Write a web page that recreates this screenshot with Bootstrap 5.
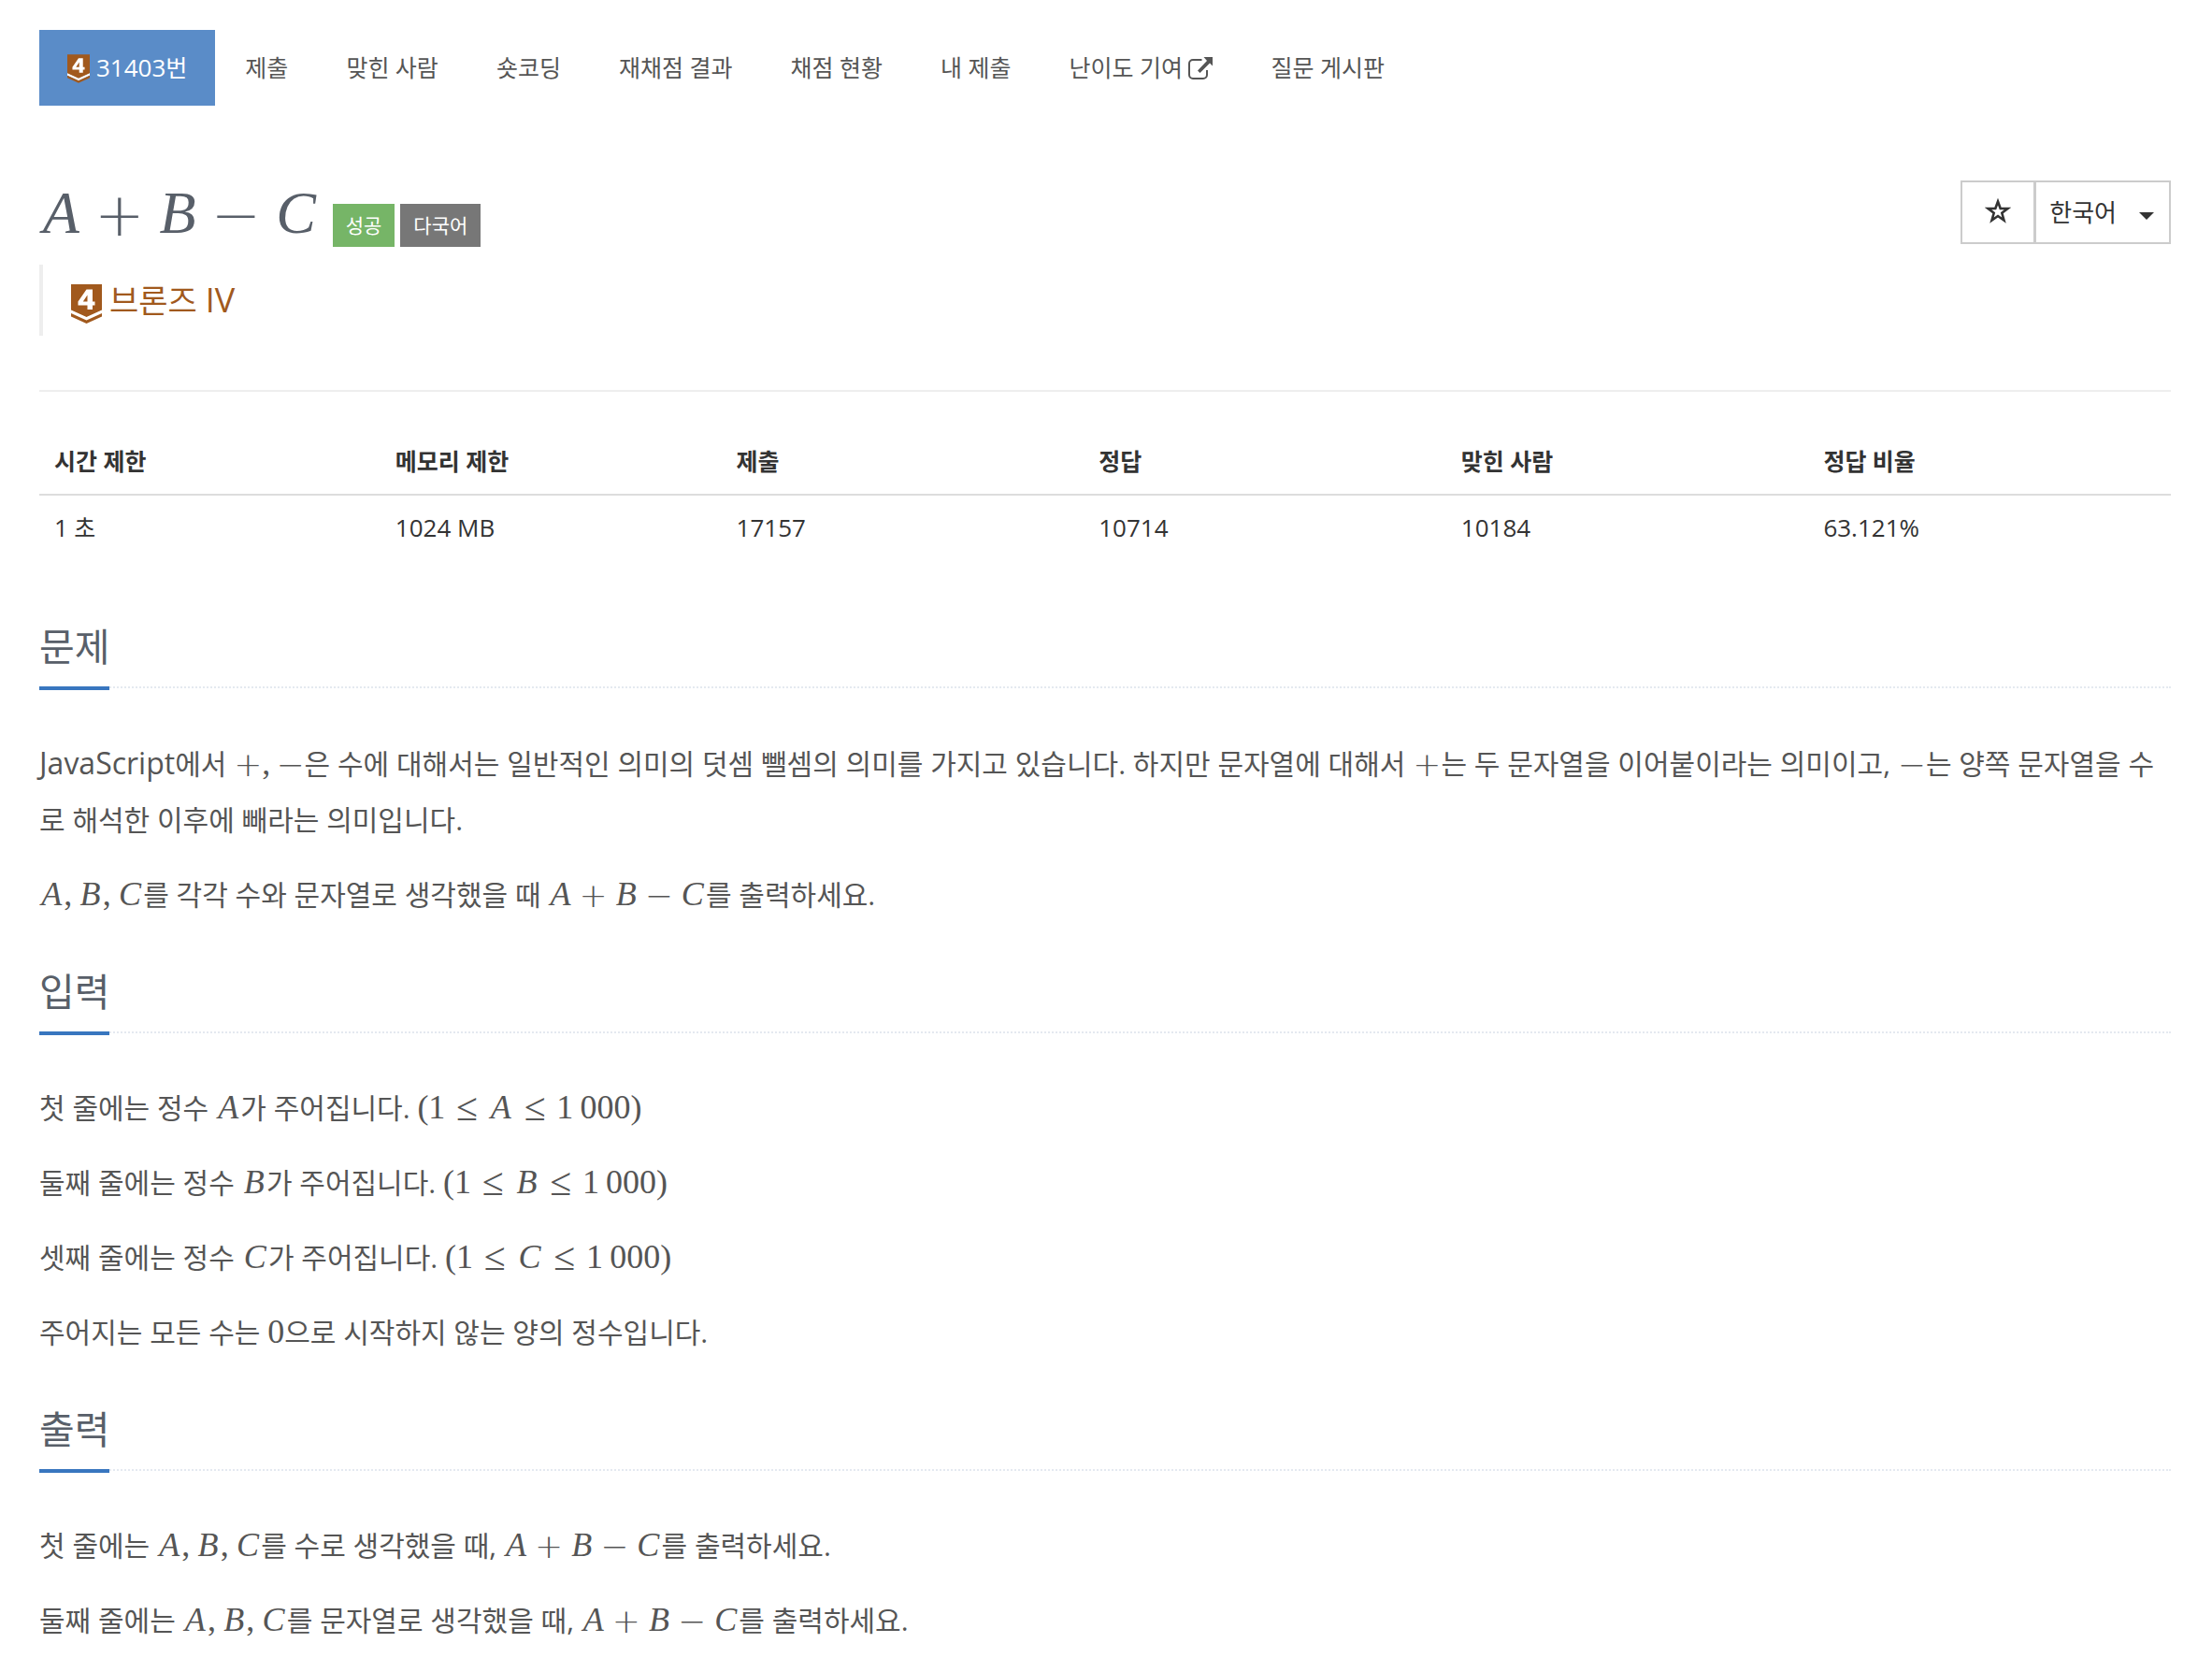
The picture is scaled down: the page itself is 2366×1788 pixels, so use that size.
<!DOCTYPE html>
<html lang="ko">
<head>
<meta charset="utf-8">
<meta name="viewport" content="width=device-width, initial-scale=1">
<title>31403번: A + B - C</title>
<link href="https://cdn.jsdelivr.net/npm/bootstrap@5.3.0/dist/css/bootstrap.min.css" rel="stylesheet">
<style>
  body {
    font-family: "Open Sans", "Noto Sans CJK KR", sans-serif;
    font-size: 30px;
    line-height: 60px;
    color: #555;
    background: #fff;
  }
  .page { padding: 32px 44px 0 42px; }

  /* Hangul is set a step smaller than the Latin text beside it */
  .lat { font-size: 32px; }

  /* problem menu */
  .menu { gap: 2px; font-size: 25px; line-height: 37px; }
  .menu .lat { font-size: 26px; }
  .menu .nav-link { padding: 22px 30px; color: #555; border-radius: 0; }
  .menu .nav-link.active { background: #5a8cc8; color: #fff; }
  .menu svg { vertical-align: -7px; }
  .menu .tier { margin-right: 7px; }

  /* title */
  .title-row { margin-top: 80px; }
  .title-row h1 { font-size: 64px; line-height: 64px; color: #585f69; }
  .tag { font-size: 21px; line-height: 30px; padding: 8px 14px; color: #fff; }
  .tag-ok { background: #76b567; margin: 0 6px 0 14px; }
  .tag-lang { background: #777; }
  .tools .btn {
    height: 68px;
    border: 2px solid #ccc;
    border-radius: 0;
    background: #fff;
    color: #333;
    font-size: 26px;
    line-height: 40px;
  }
  .tools .btn-star { width: 80px; padding: 0; }
  .tools .btn-star svg { display: block; margin: 0 auto 2px; }
  .tools .btn-lang { padding: 12px 16px 12px 14px; margin-left: -2px; }
  .tools .dropdown-toggle::after {
    margin-left: 24px;
    vertical-align: 2px;
    border-top: 8px solid;
    border-right: 8px solid transparent;
    border-left: 8px solid transparent;
  }

  .level { height: 76px; margin-top: 19px; padding-left: 30px; border-left: 4px solid #eee; font-size: 34px; line-height: 76px; color: #a1591d; }
  .level .lat { font-size: 36px; }
  .level a { color: inherit; }
  .rule { border-top: 2px solid #eee; margin: 58px 0 40px; opacity: 1; }

  /* limits table */
  .limits { font-size: 25px; line-height: 37px; color: #333; margin-bottom: 62px; }
  .limits th, .limits td { padding: 16px; border: 0; color: #333; }
  .limits th { width: 17%; border-bottom: 2px solid #ddd; }
  .limits th.narrow { width: 16%; }
  .limits .lat { font-size: 26px; }

  /* sections */
  .headline { border-bottom: 2px dotted #e4e9f0; margin-bottom: 50px; }
  .headline h2 {
    display: inline-block;
    font-size: 41px;
    font-weight: 400;
    line-height: 60px;
    color: #585f69;
    padding-bottom: 13px;
    margin: 0 0 -4px;
    border-bottom: 4px solid #3876bf;
    vertical-align: top;
  }
  .section + .section { padding-top: 23px; }
  .section p { margin-bottom: 20px; }

  /* formulas */
  .fx { font-family: "Liberation Serif", serif; font-size: 36px; line-height: 1; white-space: nowrap; }
  h1 .fx { font-size: inherit; }
  .fx var { font-style: italic; margin: 0 .06em; }
  .fx .cm { margin-right: .17em; }
  .fx .op { font-family: "DejaVu Sans", sans-serif; font-weight: 200; line-height: 1; vertical-align: -.05em; margin: 0 .19em; }
  .fx .rel { font-size: 1.16em; line-height: 1; vertical-align: -.05em; margin: 0 .28em; }
  .fx .bare { margin: 0; }
</style>
</head>
<body>
<svg class="d-none" xmlns="http://www.w3.org/2000/svg">
  <symbol id="tier" viewBox="0 0 33 42">
    <path fill="#a1591d" d="M0 0h33v28L16.500 35.500 0 28z"/>
    <path fill="#fff" d="M0 27.500 16.500 35 33 27.500V31L16.500 38.500 0 31z"/>
    <path fill="#a1591d" d="M0 31 16.500 38.500 33 31v3.500L16.500 42 0 34.500z"/>
    <path fill="#fff" fill-rule="evenodd" d="M16.500 5.500H23V18.500h2.500v4H23V27h-5.500v-4.500H7.500v-4zM17.500 11.500 12.800 18.500h4.700z"/>
  </symbol>
</svg>

<div class="page container-fluid">
  <nav aria-label="문제 메뉴">
    <ul class="nav nav-pills menu">
      <li class="nav-item"><a class="nav-link active" aria-current="page" href="#"><svg class="tier" width="24" height="31" aria-hidden="true"><use href="#tier"/></svg><span class="lat">31403</span>번</a></li>
      <li class="nav-item"><a class="nav-link" href="#">제출</a></li>
      <li class="nav-item"><a class="nav-link" href="#">맞힌 사람</a></li>
      <li class="nav-item"><a class="nav-link" href="#">숏코딩</a></li>
      <li class="nav-item"><a class="nav-link" href="#">재채점 결과</a></li>
      <li class="nav-item"><a class="nav-link" href="#">채점 현황</a></li>
      <li class="nav-item"><a class="nav-link" href="#">내 제출</a></li>
      <li class="nav-item"><a class="nav-link" href="#">난이도 기여 <svg width="26" height="30" viewBox="0 0 26 30" aria-hidden="true"><path d="M14.500 5H5a4 4 0 0 0-4 4v12a4 4 0 0 0 4 4h11a4 4 0 0 0 4-4v-5" fill="none" stroke="currentColor" stroke-width="2"/><path d="M16.500 2H26v9.500l-3-3L12.500 19 10 16.500 20 6z" fill="currentColor"/></svg></a></li>
      <li class="nav-item"><a class="nav-link" href="#">질문 게시판</a></li>
    </ul>
  </nav>

  <div class="title-row d-flex justify-content-between align-items-start">
    <div class="d-flex align-items-baseline">
      <h1 class="m-0"><span class="fx"><var>A</var><span class="op">+</span><var>B</var><span class="op">−</span><var>C</var></span></h1>
      <span class="tag tag-ok">성공</span>
      <span class="tag tag-lang">다국어</span>
    </div>
    <div class="btn-group tools">
      <button type="button" class="btn btn-star" aria-label="즐겨찾기"><svg width="28" height="28" viewBox="0 0 28 28" aria-hidden="true"><path d="M14 3.500 16.700 11H24.500L18.300 15.800 20.500 23.500 14 19 7.500 23.500 9.700 15.800 3.500 11h7.800z" fill="none" stroke="currentColor" stroke-width="2.600"/></svg></button>
      <button type="button" class="btn btn-lang dropdown-toggle" data-bs-toggle="dropdown" aria-expanded="false">한국어</button>
    </div>
  </div>

  <div class="level">
    <a class="text-decoration-none d-inline-flex align-items-center" href="#"><svg class="me-2 mt-2" width="33" height="42" aria-hidden="true"><use href="#tier"/></svg><span>브론즈 <span class="lat">IV</span></span></a>
  </div>

  <hr class="rule">

  <table class="table limits">
    <thead>
      <tr><th class="narrow" scope="col">시간 제한</th><th class="narrow" scope="col">메모리 제한</th><th scope="col">제출</th><th scope="col">정답</th><th scope="col">맞힌 사람</th><th scope="col">정답 비율</th></tr>
    </thead>
    <tbody>
      <tr><td><span class="lat">1</span> 초</td><td><span class="lat">1024 MB</span></td><td><span class="lat">17157</span></td><td><span class="lat">10714</span></td><td><span class="lat">10184</span></td><td><span class="lat">63.121%</span></td></tr>
    </tbody>
  </table>

  <section class="section">
    <div class="headline"><h2>문제</h2></div>
    <p><span class="lat">JavaScript</span>에서 <span class="fx"><span class="op bare">+</span><span class="cm">,</span><span class="op bare">−</span></span>은 수에 대해서는 일반적인 의미의 덧셈 뺄셈의 의미를 가지고 있습니다. 하지만 문자열에 대해서 <span class="fx"><span class="op bare">+</span></span>는 두 문자열을 이어붙이라는 의미이고, <span class="fx"><span class="op bare">−</span></span>는 양쪽 문자열을 수로 해석한 이후에 빼라는 의미입니다.</p>
    <p><span class="fx"><var>A</var><span class="cm">,</span><var>B</var><span class="cm">,</span><var>C</var></span>를 각각 수와 문자열로 생각했을 때 <span class="fx"><var>A</var><span class="op">+</span><var>B</var><span class="op">−</span><var>C</var></span>를 출력하세요.</p>
  </section>

  <section class="section">
    <div class="headline"><h2>입력</h2></div>
    <p>첫 줄에는 정수 <span class="fx"><var>A</var></span>가 주어집니다. <span class="fx">(1<span class="rel">≤</span><var>A</var><span class="rel">≤</span>1&thinsp;000)</span></p>
    <p>둘째 줄에는 정수 <span class="fx"><var>B</var></span>가 주어집니다. <span class="fx">(1<span class="rel">≤</span><var>B</var><span class="rel">≤</span>1&thinsp;000)</span></p>
    <p>셋째 줄에는 정수 <span class="fx"><var>C</var></span>가 주어집니다. <span class="fx">(1<span class="rel">≤</span><var>C</var><span class="rel">≤</span>1&thinsp;000)</span></p>
    <p>주어지는 모든 수는 <span class="fx">0</span>으로 시작하지 않는 양의 정수입니다.</p>
  </section>

  <section class="section">
    <div class="headline"><h2>출력</h2></div>
    <p>첫 줄에는 <span class="fx"><var>A</var><span class="cm">,</span><var>B</var><span class="cm">,</span><var>C</var></span>를 수로 생각했을 때, <span class="fx"><var>A</var><span class="op">+</span><var>B</var><span class="op">−</span><var>C</var></span>를 출력하세요.</p>
    <p>둘째 줄에는 <span class="fx"><var>A</var><span class="cm">,</span><var>B</var><span class="cm">,</span><var>C</var></span>를 문자열로 생각했을 때, <span class="fx"><var>A</var><span class="op">+</span><var>B</var><span class="op">−</span><var>C</var></span>를 출력하세요.</p>
  </section>
</div>
<script src="https://cdn.jsdelivr.net/npm/bootstrap@5.3.0/dist/js/bootstrap.bundle.min.js"></script>
</body>
</html>
